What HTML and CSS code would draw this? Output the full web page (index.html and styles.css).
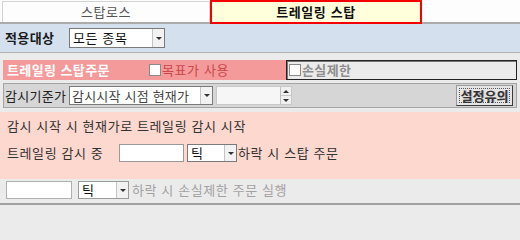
FILE: index.html
```html
<!DOCTYPE html>
<html lang="ko">
<head>
<meta charset="utf-8">
<link rel="stylesheet" href="styles.css">
</head>
<body>
<div class="tabs">
  <div class="tab tab-off">스탑로스</div>
  <div class="tab tab-on">트레일링 스탑</div>
</div>

<div class="row-target">
  <span class="lbl lbl-b">적용대상</span>
  <div class="combo combo-target">
    <span class="combo-text">모든 종목</span>
    <span class="combo-btn"><span class="tri-down"></span></span>
  </div>
</div>

<div class="row-mode">
  <div class="mode-main">
    <span class="mode-title">트레일링 스탑주문</span>
    <span class="chk"></span>
    <span class="mode-opt">목표가 사용</span>
  </div>
  <div class="mode-loss">
    <span class="chk"></span>
    <span class="loss-lbl">손실제한</span>
  </div>
</div>

<div class="row-base">
  <span class="lbl">감시기준가</span>
  <div class="combo combo-base">
    <span class="combo-text dim">감시시작 시점 현재가</span>
    <span class="combo-btn"><span class="tri-down"></span></span>
  </div>
  <div class="spin">
    <span class="spin-field"></span>
    <span class="spin-btns">
      <span class="spin-btn"><span class="tri-up"></span></span>
      <span class="spin-btn"><span class="tri-down"></span></span>
    </span>
  </div>
  <div class="btn"><span class="btn-in">설정유의</span></div>
</div>

<div class="row-trail">
  <div class="trail-line">감시 시작 시 현재가로 트레일링 감시 시작</div>
  <div class="trail-line">
    <span class="trail-lbl">트레일링 감시 중</span>
    <span class="field field-trail"></span>
    <div class="combo combo-tick">
      <span class="combo-text">틱</span>
      <span class="combo-btn"><span class="tri-down"></span></span>
    </div>
    <span class="after">하락 시 스탑 주문</span>
  </div>
</div>

<div class="row-loss">
  <span class="field field-loss"></span>
  <div class="combo combo-tick2">
    <span class="combo-text">틱</span>
    <span class="combo-btn"><span class="tri-down"></span></span>
  </div>
  <span class="after-dim">하락 시 손실제한 주문 실행</span>
</div>
</body>
</html>
```

FILE: styles.css
```css
* { box-sizing: border-box; }
html, body { margin: 0; padding: 0; background: #ebebeb; }
body {
  width: 520px;
  height: 205px;
  overflow: hidden;
  font-family: "Noto Sans CJK KR", "Noto Sans", sans-serif;
  font-size: 13px;
  letter-spacing: 0.6px;
  color: #222;
}

/* tabs */
.tabs {
  display: flex;
  height: 24px;
  background: #fdfdfe;
  border-bottom: 2px solid #ababab;
}
.tab {
  display: flex;
  align-items: center;
  justify-content: center;
  line-height: 14px;
}
.tab-off {
  width: 208px;
  margin: 1px 0 0 2px;
  border: 1px solid #d4d4d4;
  border-bottom: none;
  color: #555;
}
.tab-on {
  width: 212px;
  height: 24px;
  margin-bottom: -2px;
  background: #ffffdc;
  border: 2px solid #f40000;
  font-weight: bold;
  color: #111;
}

/* target row */
.row-target {
  display: flex;
  align-items: center;
  height: 29px;
  background: #d4e0ee;
  border-bottom: 1px solid #b2b2b2;
  padding-left: 5px;
}
.lbl {
  width: 64px;
  flex-shrink: 0;
  line-height: 14px;
  white-space: nowrap;
}
.lbl-b { font-weight: bold; color: #1a1a1a; letter-spacing: 0.4px; }

.combo {
  display: flex;
  flex-shrink: 0;
  height: 20px;
  background: #fff;
  border: 1px solid #7a7a7a;
}
.combo-text {
  flex: 1;
  display: flex;
  align-items: center;
  padding-left: 3px;
  line-height: 14px;
  white-space: nowrap;
  color: #111;
}
.combo-text.dim { color: #444; letter-spacing: 0.2px; padding-left: 2px; }
.combo-btn {
  width: 12px;
  flex-shrink: 0;
  display: flex;
  align-items: center;
  justify-content: center;
  background: #f2f2f2;
  border-left: 1px solid #c4c4c4;
}
.tri-down {
  width: 0;
  height: 0;
  border-left: 3px solid transparent;
  border-right: 3px solid transparent;
  border-top: 3px solid #333;
}
.tri-up {
  width: 0;
  height: 0;
  border-left: 3px solid transparent;
  border-right: 3px solid transparent;
  border-bottom: 3px solid #333;
}
.combo-target { width: 96px; }

/* mode row */
.row-mode {
  display: flex;
  height: 20px;
  margin: 7px 3px 0 3px;
}
.mode-main {
  width: 283px;
  display: flex;
  align-items: center;
  background: #f59a9a;
  padding-left: 4px;
}
.mode-title {
  width: 142px;
  font-weight: bold;
  color: #fff;
  line-height: 14px;
  white-space: nowrap;
  letter-spacing: 0.4px;
}
.chk {
  width: 12px;
  height: 12px;
  background: #fff;
  border: 1px solid #8a8a8a;
  margin-right: 1px;
}
.mode-opt {
  color: #c84848;
  line-height: 14px;
  white-space: nowrap;
}
.mode-loss {
  flex: 1;
  display: flex;
  align-items: center;
  padding-left: 2px;
  background: #ebebeb;
  border: 1px solid #222;
  box-shadow: inset 1px 1px 0 #777;
}
.loss-lbl {
  font-weight: bold;
  color: #8e8e8e;
  line-height: 14px;
  letter-spacing: 0.4px;
}

/* base row */
.row-base {
  display: flex;
  align-items: center;
  height: 25px;
  margin: 3px 3px 0 3px;
  padding: 0 3px 0 1px;
  background: #d6d6d6;
  border: 1px solid #a4a4a4;
}
.row-base .lbl { letter-spacing: 0.3px; }
.combo-base { width: 144px; height: 19px; }
.spin {
  display: flex;
  width: 76px;
  height: 19px;
  margin-left: 3px;
  border: 1px solid #c8c8c8;
  background: #f4f4f4;
}
.spin-field { flex: 1; background: #f6f6f6; }
.spin-btns {
  width: 11px;
  display: flex;
  flex-direction: column;
  border-left: 1px solid #c0c0c0;
}
.spin-btn {
  flex: 1;
  display: flex;
  align-items: center;
  justify-content: center;
  background: #f0f0f0;
  border-bottom: 1px solid #c8c8c8;
}
.spin-btn:last-child { border-bottom: none; }
.btn {
  margin-left: auto;
  width: 57px;
  height: 21px;
  padding: 2px;
  background: #e6e6e6;
  border: 1px solid #3a3a3a;
  border-top-color: #9a9a9a;
  border-left-color: #9a9a9a;
}
.btn-in {
  display: flex;
  align-items: center;
  justify-content: center;
  height: 100%;
  border: 1px dotted #555;
  font-weight: bold;
  color: #333;
  line-height: 12px;
  letter-spacing: 0;
  text-shadow: 1px 0 0 #bbb;
}

/* trailing row */
.row-trail {
  margin-top: 4px;
  height: 67px;
  background: #fdd8cf;
  padding: 5px 0 0 7px;
}
.trail-line {
  display: flex;
  align-items: center;
  height: 18px;
  line-height: 14px;
  color: #333;
  white-space: nowrap;
}
.trail-line + .trail-line { margin-top: 9px; }
.trail-lbl { width: 112px; }
.field {
  display: block;
  flex-shrink: 0;
  height: 18px;
  background: #fff;
  border: 1px solid #9a9a9a;
}
.field-trail { width: 65px; }
.combo-tick { width: 50px; height: 18px; margin-left: 3px; }
.after { margin-left: 1px; color: #333; }

/* loss row */
.row-loss {
  display: flex;
  align-items: center;
  height: 26px;
  padding: 0 0 2px 6px;
  border-bottom: 2px solid #a0a0a0;
}
.field-loss { width: 66px; border-color: #b0b0b0; }
.combo-tick2 { width: 51px; height: 18px; margin-left: 6px; border-color: #9a9a9a; }
.after-dim { margin-left: 3px; color: #a2a2a2; line-height: 14px; white-space: nowrap; }
```
